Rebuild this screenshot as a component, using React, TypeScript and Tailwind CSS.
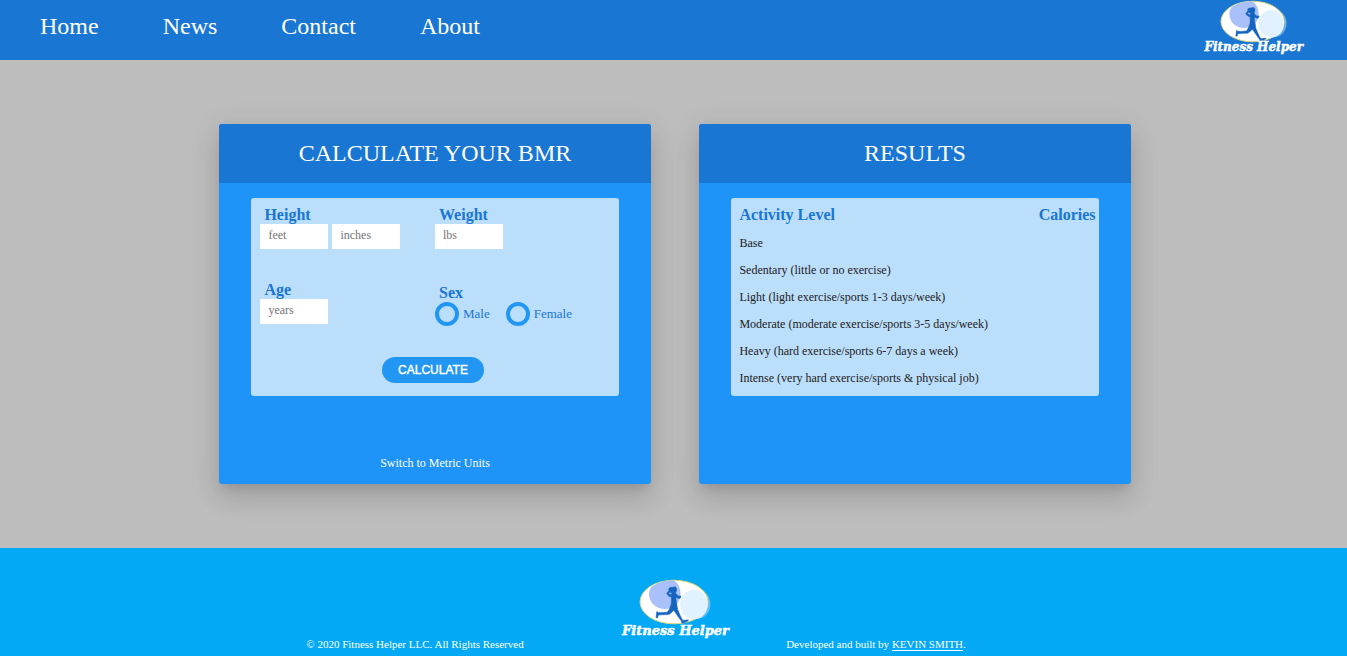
import { useState } from "react";

function Runner({ className }: { className: string }) {
  return (
    <svg viewBox="0 0 72 46" className={className} aria-hidden="true">
      <ellipse cx="58" cy="25" rx="13.5" ry="15" fill="#8cc9fb" opacity="0.7" />
      <ellipse cx="35" cy="23" rx="34" ry="21.8" fill="#fff" stroke="#dcd879" strokeWidth="1" />
      <path d="M13 7.5C18 3.5 26 1.3 34 1.2C38 2.5 41.5 8 41.5 15C41.5 24 34.500 30 26 30C17 30 10 23.500 10 15C10 12 11 9.500 13 7.500Z" fill="#a9c0fb" />
      <ellipse cx="55" cy="25.5" rx="13.800" ry="14.800" fill="#e2f1fe" />
      <path
        d="M33.500 8.500C34 7.600 36.600 7.500 37.400 9C37.700 10.500 37.600 12.500 36.500 13.600L37.300 15.200L40.200 17.600L40.600 16.800L42 17.200L41.300 19.200L39.800 19.600L36.900 18.200C37 20 37 21.600 37.400 23.500C38.200 26 38 28.500 38.600 30.500C40.200 34 41.800 38.500 43.800 41.400C45.300 41.500 47.500 41 49.300 40.800C49.600 42.400 46.500 43.400 43 44.200L42.400 42C39.600 38.500 37 34.500 34.800 31.300C33.200 33 31.400 34.800 29.600 35.600C26 35.800 22.800 35.600 19.400 36L18.400 38.900L17 38.600L17.800 32.600L19.400 33.600C22.500 33.700 25.600 33.600 28.300 33.200C30.500 30.900 31.300 28 32.300 25C32.600 22 32.200 20 32.500 18.200L29.900 17.200L27.600 14.600L30 11.400C29.300 10 30.200 7.800 33.500 8.500ZM30.600 12.800L29.600 14.500L32.200 15.900L33 14.600Z"
        fill="#1565c0"
        stroke="#1565c0"
        strokeWidth="0.6"
        strokeLinejoin="round"
      />
    </svg>
  );
}

function Logo({ large = false }: { large?: boolean }) {
  return (
    <div className="flex flex-col items-center">
      <Runner className={large ? "h-[46px] w-[72px]" : "h-[43px] w-[67px]"} />
      <span
        className={
          large
            ? "font-['DejaVu_Serif',serif] text-[13px] leading-[11px] font-bold whitespace-nowrap text-white italic [-webkit-text-stroke:0.5px_white]"
            : "font-['DejaVu_Serif',serif] text-[12px] leading-[9px] font-bold whitespace-nowrap text-white italic [-webkit-text-stroke:0.5px_white]"
        }
      >
        Fitness Helper
      </span>
    </div>
  );
}

function Card({ title, children }: { title: string; children: React.ReactNode }) {
  return (
    <section className="flex min-h-[360px] w-[432px] flex-col rounded-[3px] bg-[#1e93f8] shadow-[0_16px_24px_2px_rgba(0,0,0,0.08),0_6px_30px_5px_rgba(0,0,0,0.07),0_8px_10px_-5px_rgba(0,0,0,0.12)]">
      <h2 className="rounded-t-[3px] bg-[#1976d2] pt-[15px] pb-4 text-center text-2xl leading-7 text-white">
        {title}
      </h2>
      {children}
    </section>
  );
}

const fieldClass =
  "block h-[25px] w-[68px] bg-white px-2 pb-[2px] text-xs text-gray-800 outline-none placeholder:text-[#757575]";
const labelClass = "block pl-1 text-base leading-[18px] font-bold text-[#1976d2]";

function Radio({ id, label }: { id: string; label: string }) {
  return (
    <span className="flex items-center gap-1">
      <input
        type="radio"
        name="sex"
        id={id}
        className="size-6 appearance-none rounded-full border-4 border-[#2196f3] checked:bg-[#1976d2]"
      />
      <label htmlFor={id} className="text-[13px] leading-4 text-[#1976d2]">
        {label}
      </label>
    </span>
  );
}

const levels = [
  "Base",
  "Sedentary (little or no exercise)",
  "Light (light exercise/sports 1-3 days/week)",
  "Moderate (moderate exercise/sports 3-5 days/week)",
  "Heavy (hard exercise/sports 6-7 days a week)",
  "Intense (very hard exercise/sports & physical job)",
];

export default function App() {
  const [age, setAge] = useState("");

  return (
    <div className="flex min-h-screen flex-col bg-[#bdbdbd] font-['Liberation_Serif',serif]">
      <header className="flex h-[60px] items-start justify-between bg-[#1976d2] pr-11 pl-10">
        <nav className="flex gap-16 pt-3 text-2xl leading-7 text-white">
          <a href="#home">Home</a>
          <a href="#news">News</a>
          <a href="#contact">Contact</a>
          <a href="#about">About</a>
        </nav>
        <Logo />
      </header>

      <main className="flex grow flex-wrap items-start justify-center gap-12 py-16 pl-[3px]">
        <Card title="CALCULATE YOUR BMR">
          <form
            className="mx-auto mt-[15px] h-[198px] w-[85%] rounded-[3px] bg-[#bbdefb] px-[9px] pt-2"
            onSubmit={(e) => e.preventDefault()}
          >
            <div className="grid grid-cols-2">
              <div className="h-[75px]">
                <label htmlFor="feet" className={labelClass}>
                  Height
                </label>
                <div className="flex gap-1">
                  <input id="feet" placeholder="feet" className={fieldClass} />
                  <input id="inches" aria-label="Inches" placeholder="inches" className={fieldClass} />
                </div>
              </div>
              <div>
                <label htmlFor="weight" className={labelClass}>
                  Weight
                </label>
                <input id="weight" placeholder="lbs" className={fieldClass} />
              </div>
              <div>
                <label htmlFor="age" className={labelClass}>
                  Age
                </label>
                <input
                  id="age"
                  placeholder="years"
                  value={age}
                  onChange={(e) => setAge(e.target.value)}
                  className={fieldClass}
                />
              </div>
              <fieldset className="mt-[3px]">
                <legend className={labelClass}>Sex</legend>
                <div className="flex gap-4">
                  <Radio id="male" label="Male" />
                  <Radio id="female" label="Female" />
                </div>
              </fieldset>
            </div>
            <div className="mt-[31px] flex justify-center pr-1">
              <button
                type="submit"
                className="h-[26px] rounded-full bg-[#2196f3] px-4 font-['Liberation_Sans',sans-serif] text-xs text-white [-webkit-text-stroke:0.4px_white]"
              >
                CALCULATE
              </button>
            </div>
          </form>
          <div className="mt-auto pb-[10px] text-center">
            <button type="button" className="text-xs leading-[18px] text-white">
              Switch to Metric Units
            </button>
          </div>
        </Card>

        <Card title="RESULTS">
          <div className="mx-auto mt-[15px] h-[198px] w-[85%] rounded-[3px] bg-[#bbdefb] pt-2 pr-[3px] pl-2">
            <table className="w-full text-left text-xs text-[#212121]">
              <thead className="text-base leading-[18px] text-[#1976d2]">
                <tr>
                  <th className="p-0 pb-[3px] font-bold">Activity Level</th>
                  <th className="p-0 pb-[3px] text-right font-bold">Calories</th>
                </tr>
              </thead>
              <tbody>
                {levels.map((level) => (
                  <tr key={level} className="h-[27px]">
                    <td className="p-0 pt-1">{level}</td>
                    <td className="p-0" />
                  </tr>
                ))}
              </tbody>
            </table>
          </div>
        </Card>
      </main>

      <footer className="flex h-[108px] flex-col items-center bg-[#03a9f4] pt-[31px] pl-1 text-white">
        <Logo large />
        <div className="mt-[2px] mr-[60px] grid w-full max-w-[922px] grid-cols-2 text-[11px] leading-3">
          <p className="text-center">© 2020 Fitness Helper LLC. All Rights Reserved</p>
          <p className="text-center">
            Developed and built by{" "}
            <a href="#kevin" className="border-b border-white">
              KEVIN SMITH
            </a>
            .
          </p>
        </div>
      </footer>
    </div>
  );
}
